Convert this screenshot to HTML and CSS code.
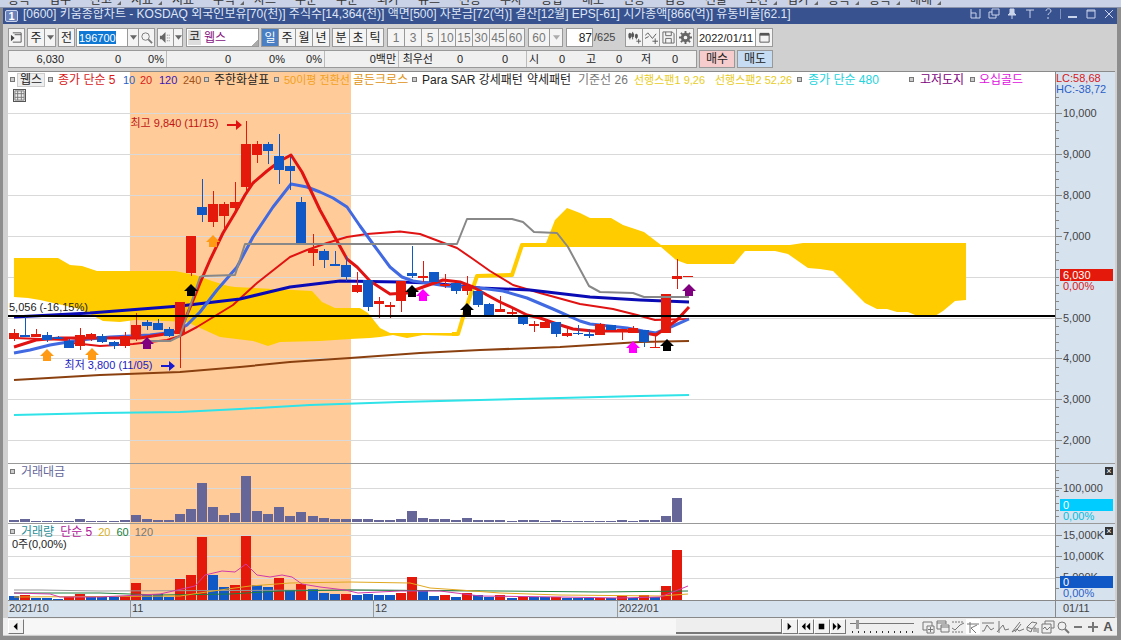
FILE: index.html
```html
<!DOCTYPE html>
<html lang="ko">
<head>
<meta charset="utf-8">
<title>키움종합차트</title>
<link rel="stylesheet" href="styles.css">
</head>
<body>
<svg class="defs" aria-hidden="true">
  <symbol id="caret" viewBox="0 0 8 5"><path d="M0 0h8L4 5z" fill="#666"/></symbol>
  <symbol id="up" viewBox="-7 -7 14 14"><path d="M0-6L7 1H4V6H-4V1H-7z"/></symbol>
</svg>
<nav class="menu">
  <a href="#">종목</a><a href="#">업무</a><a class="sub" href="#">잔고</a><a class="sub" href="#">지표</a><a href="#">지표</a><a class="sub" href="#">주식</a><a href="#">차트</a><a href="#">주문</a><a href="#">주문</a><a href="#">외가</a><a href="#">뉴스</a><a href="#">선종</a><a href="#">투자</a><a href="#">종합</a><a href="#">매도</a><a href="#">신용</a><a href="#">업종</a><a href="#">선물</a><a class="sub" href="#">조건</a><a class="sub" href="#">업가</a><a class="sub" href="#">종목</a><a class="sub" href="#">종목</a><a class="sub" href="#">매매</a>
</nav>
<main class="window">
  <header class="title">
    <span class="badge">1</span>
    <h1>[0600] 키움종합차트 - KOSDAQ 외국인보유[70(천)] 주식수[14,364(천)] 액면[500] 자본금[72(억)] 결산[12월] EPS[-61] 시가총액[866(억)] 유통비율[62.1]</h1>
    <div class="winbtns">
      <button aria-label="분할"><svg viewBox="0 0 12 12"><path d="M1 1v9h9V1M1 5h5v5"/></svg></button>
      <button aria-label="복제"><svg viewBox="0 0 12 12"><path d="M4 1h7v6H4zM4 4H1v6h7V7"/></svg></button>
      <button aria-label="고정"><svg viewBox="0 0 12 12"><path d="M4 1h4v4l2 2H2l2-2zM6 7v4" fill="#c9d3ea"/></svg></button>
      <button aria-label="글자"><svg viewBox="0 0 12 12"><path d="M2 2h8M6 2v8"/></svg></button>
      <button aria-label="도움말"><svg viewBox="0 0 12 12"><path d="M4 3c0-3 5-3 5 0 0 2-3 2-3 4M6 9v2"/></svg></button>
      <i></i>
      <button aria-label="최소화"><svg viewBox="0 0 12 12"><path d="M1 9h9" stroke-width="2"/></svg></button>
      <button aria-label="최대화"><svg viewBox="0 0 12 12"><path d="M2 2h8v8H2zM2 3h8"/></svg></button>
      <button aria-label="닫기"><svg viewBox="0 0 12 12"><path d="M2 2l8 8M10 2l-8 8"/></svg></button>
    </div>
  </header>

  <div class="tools">
    <div class="row">
      <button class="b w17 mr3" aria-label="패널"><svg class="ic" viewBox="0 0 14 14"><path d="M3 2h9v10H3M5 4h7" fill="none" stroke="#555"/><path d="M1 4v7l4-3.500z" fill="#444"/></svg></button>
      <select class="b w18" aria-label="구분"><option>주</option></select><button class="b w12 mr3" aria-label="열기"><svg class="car"><use href="#caret"/></svg></button>
      <button class="b w17 mr2">전</button>
      <div class="code"><input value="196700" aria-label="종목코드"></div><button class="b w12" aria-label="목록"><svg class="car"><use href="#caret"/></svg></button><button class="b w17 mr3" aria-label="검색"><svg class="ic" viewBox="0 0 14 14"><circle cx="6" cy="6" r="4" fill="none" stroke="#777"/><path d="M9 9l4 4" stroke="#777" stroke-width="2"/></svg></button>
      <button class="b w17" aria-label="소리"><svg class="ic" viewBox="0 0 14 14"><path d="M1 5h2l4-4v12L3 9H1z" fill="#666"/><path d="M9 4v7M11 4v7" stroke="#777" stroke-dasharray="1 2"/></svg></button><button class="b w11 mr3" aria-label="소리 목록"><svg class="car"><use href="#caret"/></svg></button>
      <div class="stock"><b>코</b><span>웹스</span></div>
      <button class="b w18 on">일</button><button class="b w18">주</button><button class="b w18">월</button><button class="b w18 mr3">년</button>
      <button class="b w18">분</button><button class="b w18">초</button><button class="b w18 mr3">틱</button>
      <div class="mins"><button class="b">1</button><button class="b">3</button><button class="b">5</button><button class="b">10</button><button class="b">15</button><button class="b">30</button><button class="b">45</button><button class="b">60</button></div>
      <select class="b w22 dim" aria-label="분 간격"><option>60</option></select><button class="b w13 mr3" aria-label="간격 목록"><svg class="car pale"><use href="#caret"/></svg></button>
      <input class="cnt" value="87" aria-label="개수"><span class="tot">/625</span>
      <button class="b w18" aria-label="봉 추가"><svg class="ic" viewBox="0 0 14 14"><path d="M2 2v7M5 1v8M9 3v6" stroke="#555"/><path d="M1 3h2v4H1zM4 3h2v3H4zM8 4h2v3H8zM9 11h5M11.500 8.500v5" fill="#555" stroke="#555"/></svg></button><button class="b w18" aria-label="지표 추가"><svg class="ic" viewBox="0 0 14 14"><path d="M0 5l3-3 5 6 4-5M0 8l4-2M8 11h6M11 8v6" fill="none" stroke="#555"/></svg></button><button class="b w18" aria-label="저장"><svg class="ic" viewBox="0 0 14 14"><path d="M1 1h10l2 2v10H1zM4 1v4h6V1M4 13V8h6v5" fill="none" stroke="#666"/></svg></button><button class="b w18 mr3" aria-label="설정"><svg class="ic" viewBox="0 0 14 14"><circle cx="7" cy="7" r="3.500" fill="none" stroke="#666" stroke-width="3"/><path d="M7 0v3M7 11v3M0 7h3M11 7h3M2 2l2 2M10 10l2 2M12 2l-2 2M4 10l-2 2" stroke="#666" stroke-width="2"/></svg></button>
      <input class="date" value="2022/01/11" aria-label="날짜"><button class="b w18" aria-label="달력"><svg class="ic" viewBox="0 0 14 14"><path d="M2 3h10v9H2z" fill="none" stroke="#555"/><path d="M2 2h10v3H2z" fill="#555"/></svg></button>
    </div>
    <div class="row quote-row">
      <div class="quote"><span>6,030</span><span>0</span><span class="sep">0%</span><span>0</span><span>0%</span><span class="sep">0%</span><span class="sep">0백만</span><span>최우선</span><span>0</span><span class="sep">0</span><span>시</span><span>0</span><span>고</span><span>0</span><span>저</span><span>0</span></div>
      <button class="trade buy">매수</button><button class="trade sell">매도</button>
    </div>
  </div>

  <section class="chart">
    <div class="pane price">
      <div class="plot">
        <svg class="draw" id="price" viewBox="8 72 1047 391" preserveAspectRatio="none"></svg>
        <div class="legend main">
          <i></i><span class="tag">웹스</span><i></i><span class="c-red">종가 단순 5</span><span class="c-blue small">10</span><span class="c-red small">20</span><span class="c-violet small">120</span><span class="c-brown small">240</span><i></i><span>주한화살표</span><i></i><span class="c-orange small">50이평 전환선</span><span class="c-gold">골든크로스</span><i></i><span>Para SAR 강세패턴</span><span>약세패턴</span><span class="c-gray">기준선 26</span><span class="c-yellow small">선행스팬1 9,26</span><span class="c-yellow small">선행스팬2 52,26</span><i></i><span class="c-cyan">종가 단순 480</span><i></i><span class="c-purple">고저도지</span><i></i><span class="c-magenta">오십골드</span>
        </div>
        <button class="gridbtn" aria-label="표"><svg viewBox="0 0 12 12"><path d="M1 1h10v10H1zM1 4h10M4 1v10M8 1v10M1 8h10"/></svg></button>
        <span class="note hi">최고 9,840 (11/15)</span>
        <span class="note lo">최저 3,800 (11/05)</span>
        <span class="note ref">5,056 (-16,15%)</span>
      </div>
      <div class="axis" id="axis-price">
        <div class="lchc"><span class="c-red">LC:58,68</span><span class="c-blue">HC:-38,72</span></div>
      </div>
    </div>
    <div class="pane value">
      <div class="plot">
        <svg class="draw" id="value" viewBox="8 464 1047 59" preserveAspectRatio="none"></svg>
        <div class="legend"><i></i><span class="c-slate">거래대금</span></div>
      </div>
      <div class="axis" id="axis-value"><button class="x" aria-label="닫기">×</button></div>
    </div>
    <div class="pane volume">
      <div class="plot">
        <svg class="draw" id="volume" viewBox="8 524 1047 76" preserveAspectRatio="none"></svg>
        <div class="legend"><i></i><span class="c-teal">거래량</span><span class="c-purple2">단순 5</span><span class="c-gold2 small">20</span><span class="c-green small">60</span><span class="c-gray small">120</span></div>
        <div class="sum">0주(0,00%)</div>
      </div>
      <div class="axis" id="axis-volume"><button class="x" aria-label="닫기">×</button></div>
    </div>
    <div class="dates">
      <div class="months"><span>2021/10</span><span>11</span><span>12</span><span>2022/01</span></div>
      <div class="day">01/11</div>
    </div>
  </section>

  <footer class="bottom">
    <button class="raised" aria-label="왼쪽"><svg viewBox="0 0 14 14"><path d="M9 3v8L5 7z"/></svg></button>
    <div class="track"><div class="thumb"></div></div>
    <button class="raised" aria-label="오른쪽"><svg viewBox="0 0 14 14"><path d="M5 3v8l4-4z"/></svg></button>
    <button class="raised" aria-label="뒤로"><svg viewBox="0 0 14 14"><path d="M7 3v8L3 7zM12 3v8L8 7z"/></svg></button>
    <button class="raised" aria-label="정지"><svg viewBox="0 0 14 14"><path d="M4 4h6v6H4z"/></svg></button>
    <button class="raised" aria-label="앞으로"><svg viewBox="0 0 14 14"><path d="M2 3v8l4-4zM7 3v8l4-4z"/></svg></button>
    <label class="slide"><input type="range" min="0" max="10" value="1" aria-label="배율"></label>
    <div class="draws">
      <button aria-label="창 추가"><svg viewBox="0 0 14 14"><path d="M6 10H2V2h9v4M6 6h7v7H6zM9.500 7v5M7 9.500h5"/></svg></button>
      <button aria-label="창 겹침"><svg viewBox="0 0 14 14"><path d="M5 9H1V1h9v3M1 3h9M5 5h8v7H5zM5 7h8"/></svg></button>
      <button aria-label="추세"><svg viewBox="0 0 14 14"><path d="M1 8l3 2 5-5 4-2"/><path d="M1 2h12M1 12h12" stroke-dasharray="2 1"/></svg></button>
      <button class="sel" aria-label="기준"><svg viewBox="0 0 14 14"><path d="M4 2v11M1 4h12M11 5l-6 3 5 5"/></svg></button>
      <button aria-label="수평"><svg viewBox="0 0 14 14"><path d="M1 3h12M1 11h2l3-6 4 5 3-2"/></svg></button>
      <button aria-label="수직"><svg viewBox="0 0 14 14"><path d="M3 1v12M1 12l6-7 2 5 4-1"/></svg></button>
      <button aria-label="펜"><svg viewBox="0 0 14 14"><path d="M1 12l8-10M4 12l6-8M1 12l5-3 2 2 5-2" /></svg></button>
      <button aria-label="지우개"><svg viewBox="0 0 14 14"><path d="M1 7l5-5 5 1-5 6zM1 7v3l4 2 1-3M8 12V8h2v4M12 8v5"/></svg></button>
      <button aria-label="복사"><svg viewBox="0 0 14 14"><path d="M4 4V1h9v7h-3M1 4h9v9H1zM2 9l2-2 2 3 3-3"/></svg></button>
      <button aria-label="돋보기"><svg viewBox="0 0 14 14"><circle cx="6" cy="6" r="4"/><path d="M9 9l4 4" stroke-width="2"/></svg></button>
      <button aria-label="축소"><svg viewBox="0 0 14 14"><path d="M3 7h8" stroke-width="2"/></svg></button>
      <button aria-label="확대"><svg viewBox="0 0 14 14"><path d="M2 7h10M7 2v10" stroke-width="2"/></svg></button>
      <button class="aa">A</button>
    </div>
  </footer>
</main>
<script src="chart.js"></script>
</body>
</html>
```
FILE: styles.css
```css
* { box-sizing: border-box; }
body {
  margin: 0; height: 100vh; display: flex; flex-direction: column; overflow: hidden;
  font: 12px/14px "Liberation Sans", "Noto Sans CJK KR", sans-serif; color: #222; background: #999;
}
button, input, select { font: inherit; color: inherit; padding: 0; margin: 0; border: 0; border-radius: 0; outline: 0; appearance: none; }
.defs { position: absolute; width: 0; height: 0; }

.menu { flex: none; height: 8px; display: flex; align-items: flex-end; gap: 17px; padding-left: 8px; overflow: hidden; background: #c9d2e6; border-bottom: 1px solid #8c94ab; }
.menu a { flex: none; width: 24px; color: #333; text-decoration: none; line-height: 14px; position: relative; }
.menu .sub::after { content: ""; position: absolute; left: 27px; bottom: 2px; border: 2px solid transparent; border-right-color: #666; border-bottom-color: #666; }

.window { flex: 1; min-height: 0; display: flex; flex-direction: column; background: #d0d0d0; border: solid #8d8d8d; border-width: 0 4px 4px 3px; }
.title { flex: none; height: 16px; display: flex; align-items: center; background: #38528f; color: #dfe6f5; overflow: hidden; padding-right: 2px; }
.badge { width: 13px; height: 12px; margin: 0 5px 0 2px; border: 1px solid #c9d3ea; border-radius: 2px; background: #6b83ba; color: #fff; font-weight: bold; font-size: 11px; line-height: 10px; text-align: center; }
.title h1 { flex: 1; margin: 0; font-size: 12px; line-height: 14px; font-weight: normal; white-space: nowrap; margin-top: -4px; }
.winbtns { display: flex; gap: 6px; align-items: center; margin-top: -4px; }
.winbtns button { width: 12px; height: 12px; background: none; }
.winbtns svg { display: block; fill: none; stroke: #c9d3ea; }
.winbtns i { width: 1px; height: 10px; background: #7f92bf; }

.tools { flex: none; padding: 4px 5px 3px; display: flex; flex-direction: column; gap: 3px; }
.row { display: flex; height: 19px; }
.b { flex: none; height: 19px; background: #f4f4f4; border: 1px solid #999; margin-left: -1px; text-align: center; line-height: 16px; display: flex; align-items: center; justify-content: center; }
select.b { display: block; text-align: center; }
.row > .b:first-child { margin-left: 0; }
.w11 { width: 10px; } .w12 { width: 12px; } .w13 { width: 14px; } .w17 { width: 17px; } .w18 { width: 18px; } .w22 { width: 22px; }
.mr2 { margin-right: 2px; } .mr3 { margin-right: 3px; }
.ic { flex: none; width: 13px; height: 13px; display: block; }
.car { flex: none; width: 7px; height: 5px; display: block; }
.pale { opacity: .5; }
.on { background: #4a7fc4; color: #fff; }
.dim, .mins .b { color: #777; }
.code { flex: none; width: 52px; border: 1px solid #999; background: #fff; padding: 2px; margin-left: -1px; }
.code input { display: block; width: 37px; height: 13px; background: #0f78d4; color: #fff; font-size: 11px; }
.stock { flex: none; width: 73px; display: flex; align-items: center; gap: 3px; border: 1px solid #999; padding: 1px; margin-right: 3px; background: linear-gradient(135deg, #fff 93%, #aaa 93%); }
.stock b { width: 13px; height: 15px; line-height: 15px; background: #ddd; text-align: center; font-weight: normal; }
.stock span { color: #87127d; }
.mins { display: flex; margin-right: 4px; }
.mins .b { width: 17px; margin-left: 0; border-right-width: 0; }
.mins .b:last-child { width: 19px; border-right-width: 1px; }
.cnt { flex: none; width: 27px; border: 1px solid #999; background: #fff; text-align: right; }
.tot { flex: none; width: 33px; line-height: 18px; color: #444; font-size: 11px; padding-left: 1px; }
.date { flex: none; width: 59px; border: 1px solid #999; background: #fff; padding-left: 1px; font-size: 11px; }
.quote-row { height: 18px; }
.quote { flex: none; width: 689px; margin-right: 2px; border: 1px solid #999; background: #f0f0f0; display: grid; line-height: 16px; text-align: right; grid-template-columns: 55px 57px 46px 64px 54px 40px 74px 34px 30px 64px 12px 26px 31px 26px 29px 1fr; }
.quote span { white-space: nowrap; font-size: 11px; }
.quote span:last-child { padding-right: 18px; }
.quote .sep { border-right: 1px solid #bbb; padding-right: 2px; }
.quote .sep:nth-child(10) { padding-right: 18px; }
.trade { flex: none; width: 36px; border: 1px solid #999; margin-right: 2px; }
.buy { background: #f7cccc; } .sell { background: #c5dcf2; }

.chart { flex: 1; min-height: 0; display: flex; flex-direction: column; margin: 0 2px 0 5px; border-top: 1px solid #8a8a8a; background: #fff; }
.pane { display: grid; grid-template-columns: 1fr 60px; min-height: 0; }
.price { flex: 391 1 0; }
.value { flex: 59 1 1px; border-top: 1px solid #999; }
.volume { flex: 76 1 1px; border-top: 1px solid #999; }
.plot { position: relative; min-width: 0; overflow: hidden; }
.draw { position: absolute; left: 0; top: 0; width: 100%; height: 100%; display: block; }
.axis { position: relative; background: #d7e2ef; border-left: 1px solid #888; font-size: 11px; color: #444; }
.axis .tick { position: absolute; left: 0; width: 3px; height: 1px; background: #888; }
.axis .tick.major { width: 6px; }
.axis .num { position: absolute; left: 7px; line-height: 12px; margin-top: -6px; }
.axis .now { position: absolute; left: 4px; right: 2px; height: 12px; line-height: 12px; padding-left: 3px; color: #fff; }
.axis .pct { position: absolute; left: 7px; line-height: 11px; }
.bg-red { background: #e5190b; } .bg-cyan { background: #00ccff; } .bg-blue { background: #1158c7; }
.lchc { position: relative; display: flex; flex-direction: column; line-height: 11px; white-space: nowrap; padding-top: 1px; }
.x { position: absolute; right: 2px; top: 3px; width: 8px; height: 8px; background: #333; color: #fff; font-size: 9px; line-height: 8px; }

.legend { position: relative; display: flex; height: 15px; align-items: center; white-space: nowrap; padding-left: 2px; gap: 6px; }
.legend i { width: 5px; height: 5px; border: 1px solid #777; background: #ccc; flex: none; }
.legend.main { gap: 0; display: grid; grid-template-columns: 7px 31px 10px 65px 17px 19px 24px 21px 10px 60px 10px 69px 59px 10px 105px 51px 56px 81px 82px 11px 101px 11px 50px 9px 60px; }
.small { font-size: 11px; }
.tag { background: #eee; border: 1px solid #ccc; width: 28px; line-height: 12px; text-align: center; }
.gridbtn { position: relative; display: block; width: 13px; height: 13px; margin: 2px 0 0 5px; background: #eee; border: 1px solid #555; }
.gridbtn svg { display: block; fill: none; stroke: #777; }
.note { position: absolute; white-space: nowrap; font-size: 11px; }
.hi { left: 11.700%; top: 11.300%; color: #c01313; }
.lo { left: 5.400%; top: 73.200%; color: #1c1cc0; }
.ref { left: 0; top: 58.300%; margin-left: 1px; }
.sum { position: relative; margin-left: 4px; line-height: 11px; font-size: 11px; }

.dates { flex: none; height: 18px; display: grid; grid-template-columns: 1fr 60px; background: #d7e2ef; border-top: 1px solid #888; border-bottom: 1px solid #888; font-size: 11px; line-height: 15px; color: #444; }
.months { display: grid; grid-template-columns: 122fr 243fr 244fr 438fr; }
.months span { padding-left: 1px; border-left: 1px solid #999; }
.months span:first-child { border-left: 0; }
.day { border-left: 1px solid #888; padding-left: 7px; }

.bottom { flex: none; height: 18px; display: flex; align-items: center; padding: 0 2px 0 5px; background: #efefef; border-bottom: 1px solid #ccc; }
.raised { flex: none; width: 16px; height: 15px; background: #f2f2f2; border: 1px solid; border-color: #fff #777 #777 #fff; }
.raised svg { display: block; width: 13px; height: 13px; }
.track { flex: 1; height: 15px; background: #f7f7f7; display: flex; justify-content: flex-end; }
.thumb { width: 14%; background: #eee; border: solid #777; border-width: 0 1px 2px 0; }
.slide { width: 66px; height: 14px; margin: 0 5px 0 4px; background: repeating-linear-gradient(90deg, #333 0 1px, transparent 1px 6px) 2px 11px / 62px 2px no-repeat; }
.slide input { display: block; width: 64px; height: 9px; background: linear-gradient(#777, #777) 0 3px / 100% 1px no-repeat; }
.slide input::-webkit-slider-thumb { appearance: none; width: 3px; height: 9px; background: #999; }
.draws { display: flex; }
.draws button { width: 14px; height: 15px; background: none; margin-right: 1px; }
.draws button:last-child { margin-right: 0; }
.draws .sel { background: #fff; }
.draws svg { display: block; width: 14px; height: 14px; fill: none; stroke: #777; }
.draws .aa { font-weight: bold; font-size: 13px; color: #555; }

.c-red { color: #d81818; } .c-blue { color: #2a5fc8; } .c-violet { color: #3a16b8; } .c-brown { color: #a0521a; }
.c-orange { color: #f2a01c; } .c-gold { color: #e09412; } .c-gray { color: #777; } .c-yellow { color: #e8cc1c; }
.c-cyan { color: #22d3dc; } .c-purple { color: #800080; } .c-magenta { color: #e010e0; } .c-slate { color: #666699; }
.c-teal { color: #2a8f96; } .c-purple2 { color: #b0209a; } .c-gold2 { color: #d9b021; } .c-green { color: #158040; }
.c-aqua { color: #00bfe0; }
```
FILE: chart.js
```js
const NS = 'http://www.w3.org/2000/svg';
const RED = '#e5190b', BLUE = '#1158c7';
const xAt = i => 14 + i * 11.056;

function add(svg, tag, attrs) {
  const el = document.createElementNS(NS, tag);
  for (const k in attrs) el.setAttribute(k, attrs[k]);
  svg.appendChild(el);
}
const rect = (svg, x, y, width, height, fill) => add(svg, 'rect', { x, y, width, height, fill, 'shape-rendering': 'crispEdges' });
const line = (svg, points, stroke, w) => add(svg, 'polyline', { points, fill: 'none', stroke, 'stroke-width': w, 'stroke-linejoin': 'round' });

/* price pane */
const p = document.getElementById('price');
rect(p, 130, 72, 221, 391, '#ffcc99');
[113, 154, 195, 236, 277, 318, 358, 399, 440].forEach(y => rect(p, 8, y, 1047, 1, '#d9d9d9'));

add(p, 'polygon', { fill: '#ffcc00', points: '14,258 58,258 70,265 82,266 97,271 175,271 195,275 212,281 228,286 235,287 312,291 322,302 335,308 360,308 368,313 380,328 390,333 458,333 458,336 423,335 407,338 393,335 380,337 370,338 350,339 320,341 280,342 268,346 253,341 220,337 200,328 187,322 165,321 135,320 120,322 103,321 90,314 80,309 40,300 28,298 14,297' });
line(p, '452,334 458,334 464,314 477,276 512,275 522,245 546,245', '#ffcc00', 4);
add(p, 'polygon', { fill: '#ffcc00', points: '543,243 546,243 555,220 567,208 580,213 590,218 611,218 623,225 644,232 661,245 790,245 803,243 966,243 966,300 955,301 943,311 935,316 920,317 908,312 897,312 887,309 877,309 865,303 853,291 833,271 820,269 808,268 788,254 775,251 745,251 734,264 687,264 676,260 661,247 543,247' });

const candles = [
  ['r',333,339,329,341],['b',335,337,317,337],['r',334,337,329,337],['b',335,340,332,342],['b',337,339,336,339],['b',341,348,339,348],
  ['r',335,346,328,350],['r',334,339,333,341],['b',336,342,334,343],['b',342,346,341,349],['r',336,346,332,348],['r',325,338,313,341],
  ['b',322,326,320,330],['b',323,330,319,330],['b',329,336,327,337],['r',302,334,302,368],['r',236,273,236,276],['b',207,215,179,222],
  ['r',204,222,191,227],['r',204,216,202,229],['r',202,208,182,212],['r',144,187,121,191],['r',144,155,141,163],['b',144,151,142,164],
  ['b',156,170,134,184],['b',166,171,157,190],['b',202,244,197,244],['r',249,253,234,266],['b',251,260,249,268],['b',264,266,251,266],
  ['b',265,277,256,281],['r',285,292,272,293],['b',280,307,280,311],['r',301,304,297,318],['r',305,307,302,318],['r',281,301,281,312],
  ['b',273,276,246,278],['r',276,278,261,282],['b',272,282,272,282],['r',284,286,274,288],['b',283,291,283,294],['r',286,291,276,295],
  ['b',291,305,291,307],['b',304,315,303,315],['r',309,312,296,312],['r',312,314,309,316],['b',317,324,317,325],['r',324,326,321,332],
  ['r',322,328,321,328],['b',322,334,322,337],['r',333,336,328,337],['b',333,334,325,335],['b',334,336,329,338],['r',324,335,323,335],
  ['b',325,330,325,330],['r',329,332,329,340],['r',328,333,326,333],['b',330,342,330,347],['r',347,348,333,348],['r',294,333,294,333],
  ['r',276,279,259,289],['r',276,277,276,277]
];
const drawCandles = () => candles.forEach(([k, t, b, h, l], i) => {
  const c = k === 'r' ? RED : BLUE, x = Math.round(xAt(i));
  rect(p, x, h, 1, l - h, c);
  rect(p, x - 5, t, 10, b - t, c);
});

line(p, '14,380 100,375 180,372 240,367 290,362 350,358 420,353 480,350 560,347 640,342 689,341', '#8b4010', 2);
line(p, '14,415 100,413 180,412 240,409 310,405 400,402 520,399 640,396 689,395', '#2fe3e8', 2);
line(p, '14,338 67,340 73,343 100,346 133,344 167,340 180,336 197,327 233,305 257,283 290,257 307,250 327,243 347,237 367,234 400,231.500 420,234 457,248 473,259 490,271 513,285 540,293 580,304 600,307 613,309 637,315 655,320 689,319', '#e01212', 2);
line(p, '14,317 90,313 180,306 240,299 290,287 340,281 400,282 430,283 480,288 530,290 590,297 640,300 689,302', '#0b0bb5', 3);
line(p, '14,353 30,350 50,345 80,340 110,337 150,335 175,332 187,325 200,312 217,290 237,267 253,237 273,207 291,184 307,187 320,192 333,198 347,207 360,226 373,244 390,267 402,277 413,281 427,283 447,286 480,288 503,291 527,298 553,309 580,321 590,324 600,325 627,328 643,331 656,333 673,326 689,319', '#4169e1', 3);
line(p, '14,347 36,340 60,338 100,338 140,338 165,334 180,331 192,303 200,283 210,260 223,233 235,213 245,195 253,183 267,171 280,161 291,155 302,172 320,210 337,241 347,259 357,267 370,281 390,294 407,293 423,287 443,280 460,282 473,287 487,295 500,302 513,308 527,315 540,318 557,324 573,329 593,331 637,331 645,333 656,335 677,320 689,307', '#e01212', 3);
drawCandles();
line(p, '150,341 170,341 180,336 200,277 203,276 235,275 245,244 457,244 467,219 512,219 523,222 534,232 557,233 568,247 589,286 600,292 633,293 644,297 689,297', '#888', 2);
rect(p, 8, 315, 1047, 2, '#000');

[[47,355,'#ff9a14'],[92,354,'#ff9a14'],[213,241,'#ff9a14'],[191,290,'#000'],[412,291,'#000'],[467,309,'#000'],[667,345,'#000'],
 [147,343,'#800080'],[689,290,'#800080'],[423,295,'#f0f'],[633,347,'#f0f']].forEach(([x, y, fill]) =>
  add(p, 'use', { href: '#up', x: x - 7, y: y - 7, width: 14, height: 14, fill }));
add(p, 'path', { d: 'M227 124h9v-4l6 5-6 5v-4h-9z', fill: '#e01212' });
add(p, 'path', { d: 'M161 365h8v-4l6 5-6 5v-4h-8z', fill: '#1818d0' });

/* traded value pane */
const v = document.getElementById('value');
rect(v, 130, 464, 221, 59, '#ffcc99');
rect(v, 8, 488, 1047, 1, '#d9d9d9');
[520,519,521,521,521,521,519,521,521,521,520,515,519,520,520,514,509,483,507,515,513,476,511,514,507,516,512,516,518,519,519,519,519,520,520,519,511,518,519,519,520,518,520,520,520,521,520,520,521,520,521,521,521,521,521,520,521,520,520,516,498]
  .forEach((t, i) => rect(v, Math.round(xAt(i)) - 5, t, 10, 522 - t, '#666699'));

/* volume pane */
const q = document.getElementById('volume');
rect(q, 130, 524, 221, 76, '#ffcc99');
[535, 556, 578].forEach(y => rect(q, 8, y, 1047, 1, '#d9d9d9'));
const vols = '596b 595r 598b 598b 599b 597r 594r 597b 597b 597b 596r 583r 595b 594b 597b 579r 575r 537r 575b 587b 585r 536r 585b 587b 578r 590b 584r 589b 593b 594b 594r 595b 594b 595b 595b 593r 577r 591b 596b 595r 597b 593r 595b 597b 595r 598b 597r 597b 597b 597r 598b 598b 598b 598r 598b 596r 598b 595r 597b 586r 550r';
vols.split(' ').forEach((s, i) => {
  const t = parseInt(s, 10);
  rect(q, Math.round(xAt(i)) - 5, t, 10, 600 - t, s.endsWith('r') ? RED : BLUE);
});
line(q, '14,590 40,590 100,591 350,590 480,591', '#999', 1);
line(q, '14,593 100,593 160,595 230,594 280,591 350,590 500,591 600,592 688,591', '#1f8040', 1);
line(q, '14,597 180,596 220,590 250,586 290,583 350,582 410,583 430,588 460,590 500,593 560,595 660,596 688,594', '#e0a820', 1);
line(q, '14,593 50,594 60,597 100,597 160,594 195,586 205,575 222,571 235,572 246,564 257,575 270,577 282,575 292,577 302,584 320,587 345,590 358,593 400,591 440,591 480,596 560,597 620,598 660,597 678,590 688,586', '#d03aa8', 1);

/* right-hand scales; each pane is described by its top edge and height */
function scale(id, top, height, majors, minors, now) {
  const box = document.getElementById(id), pc = y => ((y - top) / height * 100) + '%';
  const put = (cls, y, text) => {
    const d = document.createElement('div');
    d.className = cls; d.style.top = pc(y); d.textContent = text || '';
    box.appendChild(d);
  };
  minors.forEach(y => put('tick', y));
  majors.forEach(([y, t]) => { put('tick major', y); put('num', y, t); });
  put('now ' + now.bg, now.y, now.text);
  put('pct ' + now.fg, now.y + 12, '0,00%');
}
const range = (a, b, s) => { const o = []; for (let y = a; y < b; y += s) o.push(y); return o; };
scale('axis-price', 72, 391, [[113,'10,000'],[154,'9,000'],[195,'8,000'],[236,'7,000'],[318,'5,000'],[358,'4,000'],[399,'3,000'],[440,'2,000']],
  range(97, 460, 8.17), { y: 269, text: '6,030', bg: 'bg-red', fg: 'c-red' });
scale('axis-value', 464, 59, [[488,'100,000']], range(470, 522, 6.6), { y: 499, text: '0', bg: 'bg-cyan', fg: 'c-aqua' });
scale('axis-volume', 524, 76, [[535,'15,000K'],[556,'10,000K'],[577,'5,000K']], [546, 567, 588], { y: 576, text: '0', bg: 'bg-blue', fg: 'c-blue' });
```
